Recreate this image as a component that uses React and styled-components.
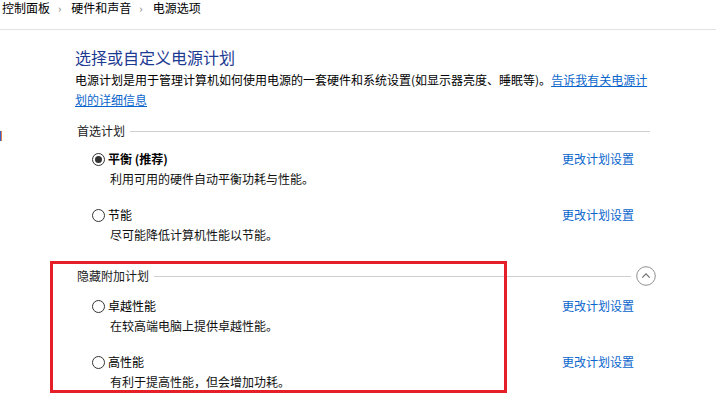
import React from "react";
import styled, { createGlobalStyle } from "styled-components";

const Global = createGlobalStyle`
  html, body { margin: 0; padding: 0; background: #fff; }
  body {
    font-family: "Noto Sans CJK SC", "Noto Sans", "Liberation Sans", sans-serif;
    font-size: 12px;
    color: #000;
    width: 716px;
    height: 397px;
    overflow: hidden;
  }
`;

const Page = styled.div`
  position: relative;
  width: 716px;
  height: 397px;
  overflow: hidden;
`;

const Breadcrumb = styled.nav`
  display: flex;
  align-items: flex-start;
  height: 29px;
  padding-left: 2px;
  border-bottom: 1px solid #e3e3e3;
  line-height: 16px;
  font-size: 12px;
  color: #000;
`;

const Crumb = styled.span``;

const Sep = styled.span`
  margin: 0 10px 0 8px;
  color: #7a7a7a;
  font-size: 11px;
`;

const Main = styled.main`
  padding: 15px 0 0 75px;
`;

const Title = styled.h1`
  margin: 0;
  font-size: 16px;
  font-weight: normal;
  line-height: 24px;
  color: #1d3a92;
`;

const Desc = styled.p`
  margin: 1px 0 0;
  width: 585px;
  line-height: 20px;
  font-size: 12px;
`;

const InfoLink = styled.a`
  color: #0a66cc;
  text-decoration: underline;
  cursor: pointer;
`;

const Sections = styled.div`
  width: 579px;
  margin-left: 2px;
`;

const Section = styled.section`
  margin-top: ${(p) => p.$top}px;
`;

const SectionHead = styled.div`
  display: flex;
  align-items: center;
  height: 20px;
  line-height: 20px;
`;

const HeadLabel = styled.span`
  color: #1a1a1a;
`;

const HeadRule = styled.div`
  flex: 1;
  height: 1px;
  background: #cfcfcf;
  margin: 0 ${(p) => p.$right}px 0 5px;
`;

const Collapse = styled.button`
  display: flex;
  padding: 0;
  border: 0;
  background: none;
  cursor: pointer;
`;

const Rows = styled.div`
  display: flex;
  flex-direction: column;
  gap: 16px;
  padding-left: 15px;
  margin-top: ${(p) => p.$top}px;
`;

const Row = styled.div`
  display: grid;
  grid-template-columns: 470px auto;
  align-items: start;
`;

const PlanInfo = styled.div`
  display: flex;
  flex-direction: column;
`;

const PlanLabel = styled.label`
  display: flex;
  align-items: center;
  gap: 3px;
  height: 20px;
  line-height: 20px;
  font-weight: ${(p) => (p.$bold ? 700 : 400)};
`;

const Radio = styled.span`
  box-sizing: border-box;
  width: 13px;
  height: 13px;
  border: 1px solid #333;
  border-radius: 50%;
  background: #fff;
  display: flex;
  align-items: center;
  justify-content: center;
  &::after {
    content: "";
    width: 7px;
    height: 7px;
    border-radius: 50%;
    background: ${(p) => (p.$checked ? "#333" : "transparent")};
  }
`;

const PlanDesc = styled.div`
  padding-left: 18px;
  line-height: 20px;
  color: #111;
`;

const ChangeLink = styled.a`
  line-height: 20px;
  color: #0a66cc;
  cursor: pointer;
`;

const Highlight = styled.div`
  position: absolute;
  left: 50px;
  top: 261px;
  width: 457px;
  height: 132px;
  box-sizing: border-box;
  border: 3px solid #e61e28;
  pointer-events: none;
`;

const EdgeMark = styled.div`
  position: absolute;
  left: 0;
  top: 131px;
  width: 2px;
  height: 10px;
  background: #dd7a4a;
  box-shadow: inset 1px 0 #3a62c8;
`;

function CollapseIcon() {
  return (
    <svg width="20" height="20" viewBox="0 0 20 20">
      <circle cx="10" cy="10" r="9.3" fill="#fff" stroke="#8e8e8e" strokeWidth="1" />
      <path d="M6.3 11.6 L10 7.9 L13.7 11.6" fill="none" stroke="#6e6e6e" strokeWidth="1.2" />
    </svg>
  );
}

function Plan({ name, desc, checked, bold }) {
  return (
    <Row>
      <PlanInfo>
        <PlanLabel $bold={bold}>
          <Radio $checked={checked} />
          {name}
        </PlanLabel>
        <PlanDesc>{desc}</PlanDesc>
      </PlanInfo>
      <ChangeLink>更改计划设置</ChangeLink>
    </Row>
  );
}

export default function App() {
  return (
    <Page>
      <Global />
      <Breadcrumb>
        <Crumb>控制面板</Crumb>
        <Sep>›</Sep>
        <Crumb>硬件和声音</Crumb>
        <Sep>›</Sep>
        <Crumb>电源选项</Crumb>
      </Breadcrumb>
      <Main>
        <Title>选择或自定义电源计划</Title>
        <Desc>
          电源计划是用于管理计算机如何使用电源的一套硬件和系统设置(如显示器亮度、睡眠等)。
          <InfoLink>
            告诉我有关电源计
            <br />
            划的详细信息
          </InfoLink>
        </Desc>
        <Sections>
          <Section $top={11}>
            <SectionHead>
              <HeadLabel>首选计划</HeadLabel>
              <HeadRule $right={6} />
            </SectionHead>
            <Rows $top={8}>
              <Plan name="平衡 (推荐)" desc="利用可用的硬件自动平衡功耗与性能。" checked bold />
              <Plan name="节能" desc="尽可能降低计算机性能以节能。" />
            </Rows>
          </Section>
          <Section $top={21}>
            <SectionHead>
              <HeadLabel>隐藏附加计划</HeadLabel>
              <HeadRule $right={5} />
              <Collapse aria-label="折叠">
                <CollapseIcon />
              </Collapse>
            </SectionHead>
            <Rows $top={10}>
              <Plan name="卓越性能" desc="在较高端电脑上提供卓越性能。" />
              <Plan name="高性能" desc="有利于提高性能，但会增加功耗。" />
            </Rows>
          </Section>
        </Sections>
      </Main>
      <EdgeMark />
      <Highlight />
    </Page>
  );
}
